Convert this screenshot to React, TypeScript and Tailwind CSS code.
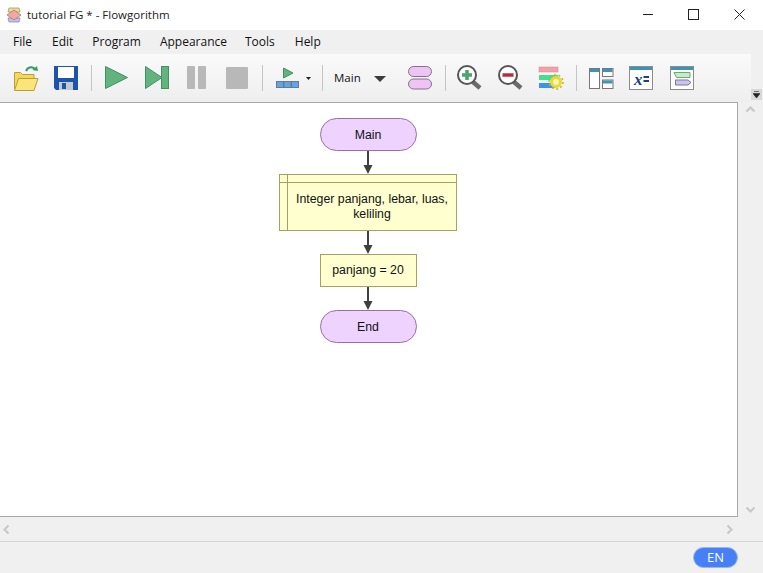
const ui = { fontFamily: '"Open Sans", "Noto Sans", sans-serif' };

const Sep = ({ className = "" }: { className?: string }) => (
    <div className={`w-px h-[26px] bg-[#c4c4c4] ${className}`} />
);

const Arrow = () => (
    <svg width="12" height="23" viewBox="0 0 12 23" className="block">
        <path d="M6 0V16" stroke="#404040" strokeWidth="2" />
        <path d="M1.5 14H10.5L6 23Z" fill="#404040" />
    </svg>
);

const Terminal = ({ label }: { label: string }) => (
    <div className="w-[97px] h-[33px] pt-px rounded-full bg-[#eed2ff] border border-[#9a6fa5] flex items-center justify-center">
        {label}
    </div>
);

const Icon = ({ children, width = 32 }: { children: React.ReactNode; width?: number }) => (
    <svg width={width} height="32" viewBox={`0 0 ${width} 32`} className="block shrink-0">
        {children}
    </svg>
);

const Chevron = ({ d }: { d: string }) => (
    <svg width="11" height="11" viewBox="0 0 11 11" className="block">
        <path d={d} fill="none" stroke="#c8c8c8" strokeWidth="2.2" />
    </svg>
);

const Toolbar = () => (
    <div className="h-[48px] relative">
        <div className="w-[751px] h-[48px] flex items-center gap-2 pl-[10px] bg-gradient-to-b from-[#fafafa] to-[#eeeeee]">
            {/* open */}
            <Icon>
                <path d="M4.5 27V10.5H10.5L12.5 12.5H24V27Z" fill="#f5d75c" stroke="#b5a03c" />
                <path d="M4.5 28.5L8.5 16.5H28L24 28.5Z" fill="#fbe47c" stroke="#b5a03c" />
                <path d="M16 9C18 4.500 23 4 25.500 8" fill="none" stroke="#3c9a68" strokeWidth="2" />
                <path d="M22.500 8L28 9L27 4Z" fill="#3c9a68" />
            </Icon>
            {/* save */}
            <Icon>
                <path d="M4 4H28V28H6L4 26Z" fill="#1d56a8" />
                <rect x="8" y="5" width="16" height="11" fill="#ffffff" />
                <rect x="9" y="20" width="14" height="8" fill="#c5c9d0" />
                <rect x="12" y="21" width="4" height="6" fill="#1d56a8" />
            </Icon>
            <Sep className="ml-px" />
            <Icon>
                <path d="M5.500 4.500L27.500 15.500L5.500 26.500Z" fill="#62b37f" stroke="#3f9560" />
            </Icon>
            <Icon>
                <path d="M5.500 4.500L22 15.500L5.500 26.500Z" fill="#62b37f" stroke="#3f9560" />
                <rect x="21.500" y="4.500" width="7" height="22" fill="#62b37f" stroke="#3f9560" />
            </Icon>
            <Icon>
                <rect x="7" y="4" width="8" height="23" rx="1" fill="#b8b8b8" />
                <rect x="18" y="4" width="8" height="23" rx="1" fill="#b8b8b8" />
            </Icon>
            <Icon>
                <rect x="6" y="5" width="22" height="22" rx="1" fill="#b8b8b8" />
            </Icon>
            <Sep className="ml-[2px]" />
            {/* layout with small arrow */}
            <Icon width={40}>
                <path d="M12.500 6L22 11L12.500 16Z" fill="#62b37f" stroke="#3f9560" />
                <rect x="5" y="19" width="23" height="7" fill="#6b7a88" />
                <rect x="6" y="20" width="6" height="5" fill="#5ea6ea" />
                <rect x="13.500" y="20" width="6" height="5" fill="#5ea6ea" />
                <rect x="21" y="20" width="6" height="5" fill="#5ea6ea" />
                <path d="M35 15H40L37.500 18Z" fill="#222222" />
            </Icon>
            <Sep className="ml-[3px]" />
            <span className="ml-[3px] w-[26px] text-[11.5px] leading-4 text-[#111111]">Main</span>
            <svg width="12" height="6" viewBox="0 0 12 6" className="block ml-[6px] mt-px">
                <path d="M0 0H12L6 6Z" fill="#3c3c3c" />
            </svg>
            <div className="ml-[10px]">
                <Icon>
                    <rect x="4.500" y="4.500" width="23" height="10" rx="5" fill="#eec4f5" stroke="#87708e" />
                    <rect x="4.500" y="17" width="23" height="10" rx="5" fill="#eec4f5" stroke="#87708e" />
                </Icon>
            </div>
            <Sep className="ml-px" />
            {/* zoom in */}
            <Icon>
                <path d="M19 20L26 26" stroke="#6b6b6b" strokeWidth="4.500" />
                <circle cx="13" cy="13" r="9" fill="#ffffff" stroke="#555555" strokeWidth="2" />
                <path d="M13 8V18M8 13H18" stroke="#47a768" strokeWidth="3.500" />
            </Icon>
            {/* zoom out */}
            <Icon>
                <path d="M20 20L27 26" stroke="#6b6b6b" strokeWidth="4.500" />
                <circle cx="14" cy="13" r="9" fill="#ffffff" stroke="#555555" strokeWidth="2" />
                <path d="M8.500 13H19.500" stroke="#bb2d35" strokeWidth="3.500" />
            </Icon>
            {/* settings */}
            <Icon>
                <rect x="5" y="5" width="19" height="5" fill="#f5a0a8" stroke="#cc8a90" strokeWidth="0.5" />
                <rect x="5" y="13" width="19" height="5" fill="#3fe08f" />
                <rect x="5" y="21" width="16" height="5" fill="#3d93e6" />
                <circle cx="22" cy="20" r="4.500" fill="#fff7b0" stroke="#e8d83a" strokeWidth="3" />
                <circle cx="22" cy="20" r="7" fill="none" stroke="#c2b22a" strokeWidth="1.500" strokeDasharray="2 2.400" />
            </Icon>
            <Sep className="ml-[2px]" />
            {/* panels */}
            <Icon>
                <rect x="4.500" y="6.500" width="10" height="20" fill="#ffffff" stroke="#777777" />
                <rect x="5" y="7" width="9" height="3" fill="#3b93b5" />
                <rect x="17.500" y="6.500" width="10.500" height="8" fill="#ffffff" stroke="#777777" />
                <rect x="18" y="7" width="9.500" height="3" fill="#3b93b5" />
                <rect x="17.500" y="18" width="10.500" height="8.500" fill="#ffffff" stroke="#777777" />
                <rect x="18" y="18.500" width="9.500" height="3" fill="#3b93b5" />
            </Icon>
            {/* variables */}
            <Icon>
                <rect x="4.500" y="4.500" width="23" height="23" fill="#ffffff" stroke="#8c8c8c" />
                <rect x="5" y="5" width="22" height="3" fill="#3b93b5" />
                <text x="9" y="23" fontFamily='"Liberation Serif", serif' fontStyle="italic" fontWeight="700" fontSize="17" fill="#1f3f86">x</text>
                <path d="M18.500 15H24M18.500 19H24" stroke="#1f3f86" strokeWidth="2" />
            </Icon>
            {/* shapes */}
            <Icon>
                <rect x="5.500" y="4.500" width="23" height="23" fill="#ffffff" stroke="#8c8c8c" />
                <rect x="6" y="5" width="22" height="3" fill="#3b93b5" />
                <path d="M9 10.500H25V15.500H11.500Z" fill="#c5edc5" stroke="#72a872" />
                <path d="M10.500 18H23L26 20.500L23 23H10.500Z" fill="#c9c5f0" stroke="#7a76a8" />
            </Icon>
        </div>
        <div className="absolute left-[751px] bottom-[2px] w-[11px] h-[11px] bg-[#d8d8d8] flex items-center justify-center">
            <svg width="7" height="7" viewBox="0 0 7 7" className="block">
                <path d="M1 .5H6M0 2.500H7L3.500 7Z" fill="#222222" stroke="#222222" strokeWidth="0.6" />
            </svg>
        </div>
    </div>
);

const Flowchart = () => (
    <div
        className="w-[738px] h-[415px] bg-white border-t border-r border-b border-[#a8a8a8] flex flex-col items-center pt-[15px] pr-px text-[12.3px] leading-[15px] text-[#111111]"
        style={{ fontFamily: '"Liberation Sans", Arial, sans-serif' }}
    >
        <Terminal label="Main" />
        <Arrow />
        <div className="w-[178px] h-[57px] bg-[#ffffcf] border border-[#a5a064] flex flex-col">
            <div className="h-[8px] border-b border-[#a5a064] flex">
                <div className="w-[8px] border-r border-[#a5a064]" />
            </div>
            <div className="flex-1 flex">
                <div className="w-[8px] border-r border-[#a5a064]" />
                <div className="flex-1 flex items-center justify-center text-center">
                    <span className="w-[160px]">Integer panjang, lebar, luas, keliling</span>
                </div>
            </div>
        </div>
        <Arrow />
        <div className="w-[97px] h-[33px] bg-[#ffffcf] border border-[#a5a064] flex items-center justify-center">
            panjang = 20
        </div>
        <Arrow />
        <Terminal label="End" />
    </div>
);

export default function App() {
    return (
        <div className="w-[763px] h-[573px] overflow-hidden bg-[#f0f0f0] flex flex-col" style={ui}>
            <div className="h-[30px] bg-white flex items-center pr-[18px]">
                <svg width="16" height="16" viewBox="0 0 16 16" className="block ml-[6px]">
                    <path d="M3 1H13L14 5H2Z" fill="#ecdf8e" stroke="#8d8d6a" strokeWidth="0.7" />
                    <path d="M2 11H14L13 15H3Z" fill="#c5c0ef" stroke="#7f7ca5" strokeWidth="0.7" />
                    <path d="M8 3L15 8L8 13L1 8Z" fill="#f2a8a0" stroke="#9a6e6a" strokeWidth="0.7" />
                </svg>
                <span className="ml-[5px] text-[11.5px] text-[#222222]">tutorial FG * - Flowgorithm</span>
                <svg width="10" height="10" viewBox="0 0 10 10" className="block ml-auto mb-[2px]">
                    <path d="M0 5.500H10" stroke="#222222" />
                </svg>
                <svg width="11" height="11" viewBox="0 0 11 11" className="block ml-[35px] mb-[2px]">
                    <rect x="0.500" y="0.500" width="10" height="10" fill="none" stroke="#222222" />
                </svg>
                <svg width="11" height="11" viewBox="0 0 11 11" className="block ml-[35px] mb-[2px]">
                    <path d="M.5 .5L10.500 10.500M10.500 .5L.5 10.500" stroke="#222222" />
                </svg>
            </div>
            <div className="h-[24px] flex items-center pl-[13px] text-[12px] text-[#111111]">
                <span>File</span>
                <span className="ml-[20px]">Edit</span>
                <span className="ml-[19px]">Program</span>
                <span className="ml-[19px]">Appearance</span>
                <span className="ml-[18px]">Tools</span>
                <span className="ml-[20px]">Help</span>
            </div>
            <Toolbar />
            <div className="flex h-[415px]">
                <Flowchart />
                <div className="flex-1 flex flex-col items-center justify-between py-[2px]">
                    <Chevron d="M1.500 7.500L5.500 3.500L9.500 7.500" />
                    <Chevron d="M1.500 3.500L5.500 7.500L9.500 3.500" />
                </div>
            </div>
            <div className="h-[25px] flex items-center justify-between pl-[1px] pr-[28px] border-b border-[#d4d4d4]">
                <Chevron d="M7.500 1.500L3.500 5.500L7.500 9.500" />
                <Chevron d="M3.500 1.500L7.500 5.500L3.500 9.500" />
            </div>
            <div className="flex-1 flex items-center justify-end pr-[25px]">
                <div className="w-[45px] h-[21px] rounded-full bg-[#4680f8] border border-[#9db7dc] text-white text-[13px] flex items-center justify-center">
                    EN
                </div>
            </div>
        </div>
    );
}
